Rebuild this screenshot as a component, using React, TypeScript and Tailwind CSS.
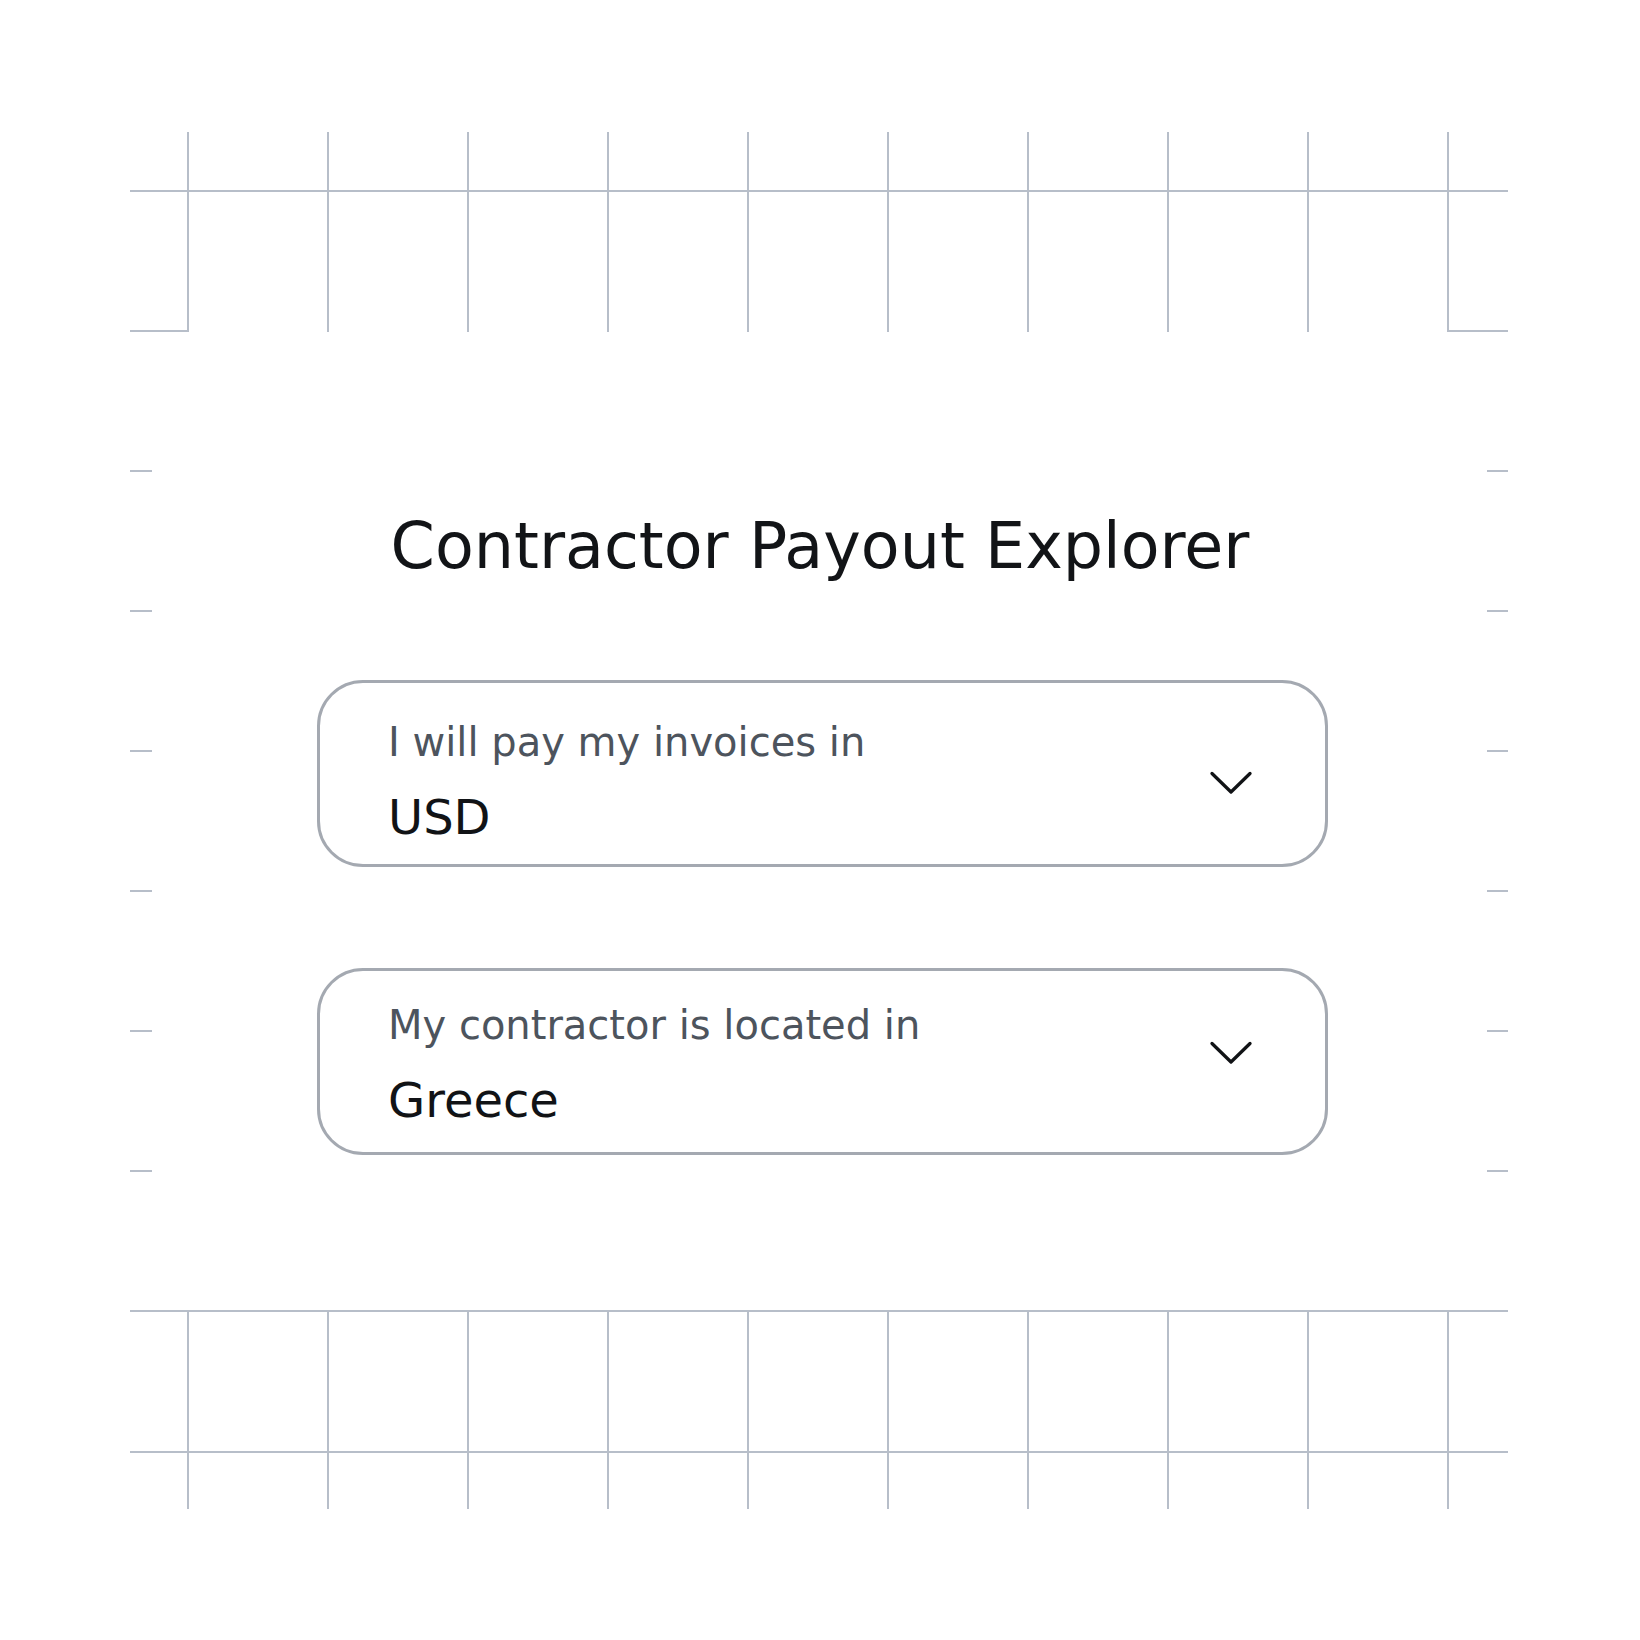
const LINE = '#b7bec9';
const COLS = Array.from({ length: 10 }, (_, i) => 188 + i * 140);
const TICKS = [471, 611, 751, 891, 1031, 1171];

function GridBackdrop() {
  return (
    <svg className="absolute inset-0" width={1640} height={1640} viewBox="0 0 1640 1640" fill="none">
      <g stroke={LINE} strokeWidth={2}>
        {/* top ruler */}
        {COLS.map(x => (
          <line key={`t${x}`} x1={x} y1={132} x2={x} y2={332} />
        ))}
        <line x1={130} y1={191} x2={1508} y2={191} />
        <line x1={130} y1={331} x2={189} y2={331} />
        <line x1={1447} y1={331} x2={1508} y2={331} />

        {/* side ticks */}
        {TICKS.map(y => (
          <g key={y}>
            <line x1={130} y1={y} x2={152} y2={y} />
            <line x1={1487} y1={y} x2={1508} y2={y} />
          </g>
        ))}

        {/* bottom ruler */}
        {COLS.map(x => (
          <line key={`b${x}`} x1={x} y1={1310} x2={x} y2={1509} />
        ))}
        <line x1={130} y1={1311} x2={1508} y2={1311} />
        <line x1={130} y1={1452} x2={1508} y2={1452} />
      </g>
    </svg>
  );
}

function Chevron() {
  return (
    <svg width={44} height={25} viewBox="0 0 44 25" fill="none">
      <path d="M3 3.5 L22 22 L41 3.5" stroke="#111316" strokeWidth={3.3} strokeLinecap="round" strokeLinejoin="round" />
    </svg>
  );
}

interface SelectFieldProps {
  label: string;
  value: string;
  /** the two boxes sit slightly differently in the design */
  variant: 'first' | 'second';
}

function SelectField({ label, value, variant }: SelectFieldProps) {
  const first = variant === 'first';
  return (
    <button
      type="button"
      className={`w-full h-[187px] flex items-center justify-between text-left rounded-[46px] border-[3px] border-[#a4a9b1] bg-white pl-[68px] pr-[72px] ${
        first ? 'pt-[39px]' : 'pt-[34px]'
      }`}
    >
      <div className="flex flex-col self-start">
        <span className="text-[40px] leading-none text-[#4d545d] whitespace-nowrap">{label}</span>
        <span className="mt-[31px] text-[48px] leading-none text-[#111316]">{value}</span>
      </div>
      <span className={first ? '-translate-y-[10px]' : '-translate-y-[26px]'}>
        <Chevron />
      </span>
    </button>
  );
}

export default function App() {
  return (
    <div className="relative w-[1640px] h-[1640px] bg-white overflow-hidden font-['DejaVu_Sans',sans-serif]">
      <GridBackdrop />
      <main className="relative flex flex-col items-center pt-[515px]">
        <h1 className="text-[63.5px] leading-none font-normal text-[#121417]">
          Contractor Payout Explorer
        </h1>
        <div className="w-[1011px] ml-[5px] mt-[101px] flex flex-col gap-[101px]">
          <SelectField label="I will pay my invoices in" value="USD" variant="first" />
          <SelectField label="My contractor is located in" value="Greece" variant="second" />
        </div>
      </main>
    </div>
  );
}
